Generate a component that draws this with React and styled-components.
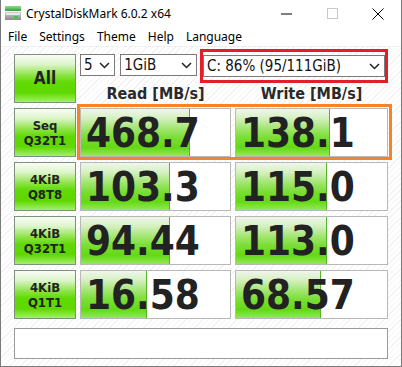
import React from 'react'
import styled, { createGlobalStyle } from 'styled-components'

const GlobalStyle = createGlobalStyle`
  html, body {
    margin: 0;
    padding: 0;
    background: #fff;
  }
  body {
    width: 402px;
    height: 367px;
    overflow: hidden;
  }
`

const UI_FONT = `"Noto Sans", "Open Sans", sans-serif`
const CDM_FONT = `"DejaVu Sans Condensed", "DejaVu Sans", sans-serif`

const Window = styled.div`
  box-sizing: border-box;
  width: 402px;
  height: 367px;
  border: 1px solid #7a7a7a;
  border-top: none;
  display: flex;
  flex-direction: column;
  background: #fff;
  overflow: hidden;
`

const TitleBar = styled.div`
  height: 27px;
  display: flex;
  align-items: center;
  padding-left: 3px;
  font: 12px ${UI_FONT};
  color: #000;
`

const Title = styled.span`
  margin-left: 3px;
  flex: 1;
`

const Caption = styled.div`
  width: 46px;
  height: 27px;
  display: flex;
  align-items: center;
  justify-content: center;
`

const MenuBar = styled.div`
  height: 19px;
  display: flex;
  align-items: center;
  padding-left: 1px;
  border-bottom: 1px solid #f0f0f0;
  font: 12px ${UI_FONT};
`

const MenuItem = styled.span`
  padding: 0 6px;
`

const Content = styled.div`
  flex: 1;
  padding: 7px 0 0 13px;
  background: repeating-linear-gradient(135deg, #ffffff 0 3px, #f2f2f2 3px 4px);
`

const Board = styled.div`
  display: grid;
  grid-template-columns: 62px 151px 153px;
  grid-auto-rows: 49px;
  column-gap: 4px;
  row-gap: 5px;
`

const greenButton = `linear-gradient(to bottom, #f9fdf6 0%, #dcf5ca 20%, #8fe44a 42%, #60da04 58%, #5fd800 80%, #a2ef6c 100%)`

const TestButton = styled.div`
  grid-column: 1;
  grid-row: ${p => p.$row};
  box-sizing: border-box;
  border: 1px solid #7c927c;
  background: ${greenButton};
  display: flex;
  flex-direction: column;
  align-items: center;
  justify-content: center;
  font: bold ${p => (p.$big ? '17px' : '13px')} / 15px ${CDM_FONT};
  color: #222;
`

const TopArea = styled.div`
  grid-column: 2 / 4;
  grid-row: 1;
  display: flex;
  flex-direction: column;
`

const SelectRow = styled.div`
  height: 22px;
  display: flex;
  align-items: flex-start;
`

const Select = styled.div`
  box-sizing: border-box;
  width: ${p => p.$w}px;
  height: 22px;
  margin-right: ${p => p.$gap || 0}px;
  border: 1px solid #7a7a7a;
  background: #fff;
  display: flex;
  align-items: center;
  justify-content: space-between;
  padding: 0 4px 0 3px;
  font: 15px ${CDM_FONT};
  color: #111;
`

const Highlight = styled.div`
  margin-top: -5px;
  padding: 3px 0;
  border: 3px solid #e41e26;
  display: flex;
`

const Headers = styled.div`
  flex: 1;
  display: grid;
  grid-template-columns: 151px 153px;
  column-gap: 4px;
  align-items: end;
  font: bold 16px / 19px ${CDM_FONT};
  color: #2a2a2a;
  text-align: center;
`

const Cell = styled.div`
  grid-column: ${p => p.$col};
  grid-row: ${p => p.$row};
  position: relative;
  box-sizing: border-box;
  border: 1px solid #b8b8b8;
  background: #fff;
  display: flex;
  align-items: center;
  padding-left: 5px;
  overflow: hidden;
`

const Bar = styled.div`
  position: absolute;
  left: 0;
  top: 0;
  bottom: 0;
  box-sizing: border-box;
  border-right: 1px solid #55b527;
  background: linear-gradient(to bottom, #f0f6ec 0%, #d4f0bf 20%, #a6e676 40%, #7bde36 60%, #64d914 82%, #93e957 100%);
`

const Value = styled.span`
  position: relative;
  font: bold 40px / 1 ${CDM_FONT};
  color: #222;
`

const Frame = styled.div`
  grid-column: 2 / 4;
  grid-row: 2;
  margin: -4px -4px -3px -3px;
  border: 3px solid #f5832a;
  pointer-events: none;
  z-index: 1;
`

const Comment = styled.div`
  box-sizing: border-box;
  width: 374px;
  height: 31px;
  margin-top: 9px;
  border: 1px solid #9a9a9a;
  background: #fff;
`

const Chevron = () => (
  <svg width="11" height="7" viewBox="0 0 11 7">
    <polyline points="1,1 5.5,5.5 10,1" fill="none" stroke="#222" strokeWidth="1.5" />
  </svg>
)

const AppIcon = () => (
  <svg width="19" height="15" viewBox="0 0 19 15">
    <defs>
      <linearGradient id="g" x1="0" y1="0" x2="0" y2="1">
        <stop offset="0" stopColor="#8fe08a" />
        <stop offset="1" stopColor="#2f9e3a" />
      </linearGradient>
      <linearGradient id="d" x1="0" y1="0" x2="0" y2="1">
        <stop offset="0" stopColor="#d0d0d0" />
        <stop offset="1" stopColor="#8a8a8a" />
      </linearGradient>
    </defs>
    <rect x="1" y="0" width="16" height="5" fill="url(#g)" />
    <rect x="1" y="6" width="16" height="8" fill="url(#d)" />
    <rect x="2" y="7" width="14" height="2" fill="#e8e8e8" />
    <rect x="10" y="10" width="4" height="2" fill="#3ec63e" />
  </svg>
)

const rows = [
  { label: ['Seq', 'Q32T1'], read: '468.7', readPct: 73, write: '138.1', writePct: 62 },
  { label: ['4KiB', 'Q8T8'], read: '103.3', readPct: 59.6, write: '115.0', writePct: 60.5 },
  { label: ['4KiB', 'Q32T1'], read: '94.44', readPct: 59.6, write: '113.0', writePct: 60.5 },
  { label: ['4KiB', 'Q1T1'], read: '16.58', readPct: 44.4, write: '68.57', writePct: 56.6 }
]

const Result = ({ value, pct, col, row }) => (
  <Cell $col={col} $row={row}>
    <Bar style={{ width: `${pct}%` }} />
    <Value>{value}</Value>
  </Cell>
)

export default function App() {
  return (
    <>
      <GlobalStyle />
      <Window>
        <TitleBar>
          <AppIcon />
          <Title>CrystalDiskMark 6.0.2 x64</Title>
          <Caption>
            <svg width="11" height="2" viewBox="0 0 11 2"><rect width="11" height="1" y="0.5" fill="#000" /></svg>
          </Caption>
          <Caption>
            <svg width="11" height="11" viewBox="0 0 11 11"><rect x="0.5" y="0.5" width="10" height="10" fill="none" stroke="#c8c8c8" /></svg>
          </Caption>
          <Caption>
            <svg width="12" height="12" viewBox="0 0 12 12"><path d="M0.5 0.5 L11.5 11.5 M11.5 0.5 L0.5 11.5" stroke="#000" strokeWidth="1" /></svg>
          </Caption>
        </TitleBar>
        <MenuBar>
          {['File', 'Settings', 'Theme', 'Help', 'Language'].map(m => (
            <MenuItem key={m}>{m}</MenuItem>
          ))}
        </MenuBar>
        <Content>
          <Board>
            <TestButton $big $row={1}>All</TestButton>
            <TopArea>
              <SelectRow>
                <Select $w={36} $gap={5}>
                  <span>5</span>
                  <Chevron />
                </Select>
                <Select $w={79} $gap={3}>
                  <span>1GiB</span>
                  <Chevron />
                </Select>
                <Highlight>
                  <Select $w={182}>
                    <span>C: 86% (95/111GiB)</span>
                    <Chevron />
                  </Select>
                </Highlight>
              </SelectRow>
              <Headers>
                <span>Read [MB/s]</span>
                <span>Write [MB/s]</span>
              </Headers>
            </TopArea>
            {rows.map((r, i) => (
              <React.Fragment key={r.label.join()}>
                <TestButton $row={i + 2}>
                  <span>{r.label[0]}</span>
                  <span>{r.label[1]}</span>
                </TestButton>
                <Result value={r.read} pct={r.readPct} col={2} row={i + 2} />
                <Result value={r.write} pct={r.writePct} col={3} row={i + 2} />
              </React.Fragment>
            ))}
            <Frame />
          </Board>
          <Comment />
        </Content>
      </Window>
    </>
  )
}
